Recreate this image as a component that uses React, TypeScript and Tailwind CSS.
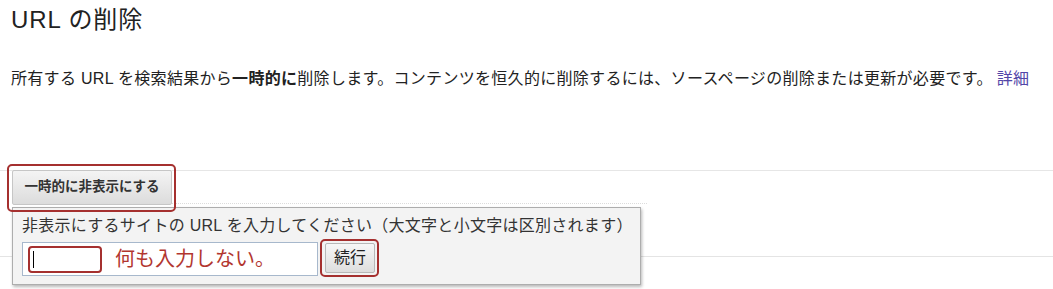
export default function App() {
  return (
    <div className="relative h-[289px] w-[1053px] overflow-hidden bg-white font-['Liberation_Sans','Noto_Sans_CJK_JP',sans-serif] text-[#222]">
      <h1 className="pl-[11px] pt-[4px] text-[24px] font-normal leading-[32px] tracking-[0.9px] text-[#222]">URL の削除</h1>
      <p className="mt-[31px] whitespace-nowrap pl-[11px] text-[16px] leading-[24px] tracking-[0.3px] text-[#222]">
        所有する URL を検索結果から<b className="font-bold">一時的に</b>削除します。コンテンツを恒久的に削除するには、ソースページの削除または更新が必要です。<a className="ml-[4px] text-[#5246a8]">詳細</a>
      </p>

      <div className="relative mt-[79px] border-t border-[#e6e6e6]">
        <div className="flex items-start">
          <div className="relative -mt-px ml-[12px]">
            <button className="flex h-[35px] w-[160px] items-center justify-center rounded-[2px] border border-[#c6c6c6] bg-linear-to-b from-[#f4f4f4] to-[#dcdcdc] text-[13.5px] font-bold text-[#333]">
              一時的に非表示にする
            </button>
            <div className="pointer-events-none absolute -bottom-[7px] -left-[5px] -right-[4px] -top-[6px] z-20 rounded-[5px] border-2 border-[#a5302f]"></div>
          </div>
          <div className="mt-[32px] h-0 w-[475px] border-b border-dotted border-[#dcdcdc]"></div>
        </div>

        <div className="mt-[51px] h-0 border-t border-[#e4e4e4]"></div>

        <div className="absolute left-[12px] top-[36px] z-10 h-[78px] w-[629px] border border-[#adadad] bg-[#f3f3f3] pl-[9px] pt-[6px] shadow-[1px_2px_3px_rgba(0,0,0,0.28)]">
          <div className="whitespace-nowrap text-[16px] leading-[24px] tracking-[0.28px] text-[#333]">
            非表示にするサイトの URL を入力してください（大文字と小文字は区別されます）
          </div>
          <div className="mt-[4px] flex items-start">
            <div className="flex h-[34px] w-[296px] items-center border border-[#a7b8cc] bg-white">
              <div className="ml-[5px] flex h-[27px] w-[74px] items-center rounded-[4px] border-2 border-[#a5302f]">
                <div className="ml-[3px] h-[17px] w-px bg-black"></div>
              </div>
              <span className="ml-[13px] whitespace-nowrap text-[20px] leading-[24px] text-[#b2362f]">何も入力しない。</span>
            </div>
            <div className="relative ml-[7px] mt-px">
              <button className="flex h-[30px] w-[50px] items-center justify-center rounded-[2px] border border-[#b8b8b8] bg-linear-to-b from-[#f7f7f7] to-[#dedede] text-[16px] text-[#222]">
                続行
              </button>
              <div className="pointer-events-none absolute -bottom-[4px] -left-[5px] -right-[4px] -top-[4px] rounded-[5px] border-2 border-[#a5302f]"></div>
            </div>
          </div>
        </div>
      </div>
    </div>
  );
}
